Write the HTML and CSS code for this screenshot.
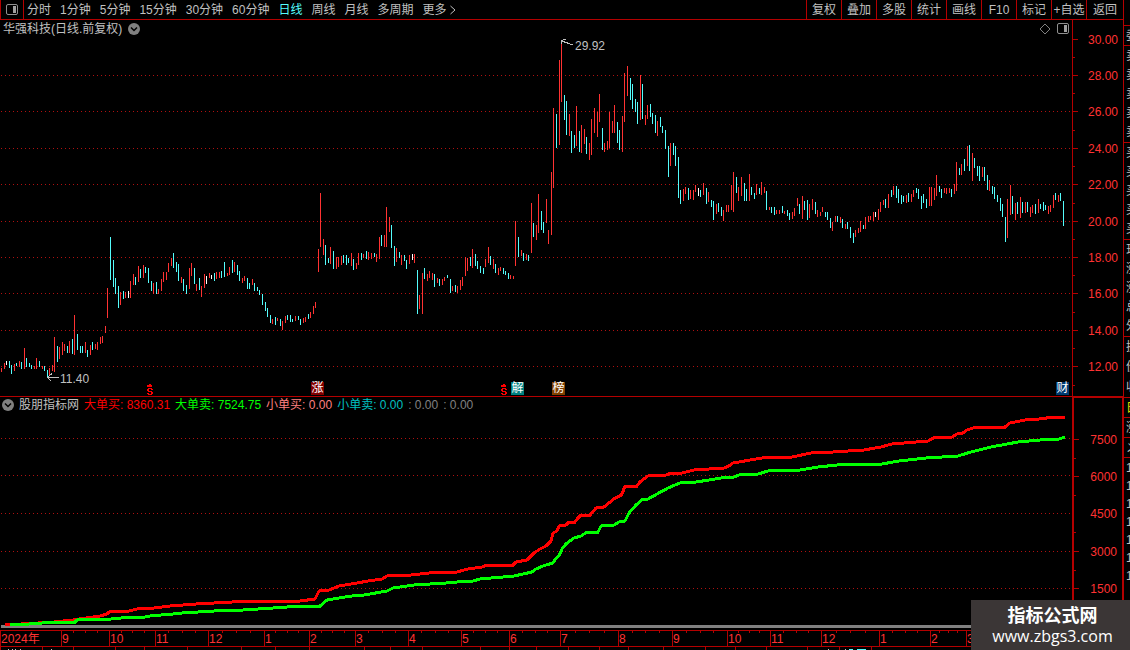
FILE: index.html
```html
<!DOCTYPE html>
<html lang="zh-CN">
<head>
    <meta charset="UTF-8">
    <meta name="viewport" content="width=device-width, initial-scale=1.0">
    <title>华强科技 日线</title>
    <link rel="stylesheet" href="styles.css">
</head>
<body>
    <div class="terminal">
        <main class="main">
            <header class="toolbar">
                <button class="layout-btn" aria-label="布局">
                    <svg width="12" height="12" viewBox="0 0 12 12"><rect x="0.5" y="0.5" width="11" height="10" rx="1.5" fill="none" stroke="#909090"/><rect x="7" y="2" width="3" height="7" fill="#a0a0a0"/></svg>
                </button>
                <nav class="periods">
                    <button>分时</button>
                    <button>1分钟</button>
                    <button>5分钟</button>
                    <button>15分钟</button>
                    <button>30分钟</button>
                    <button>60分钟</button>
                    <button class="active">日线</button>
                    <button>周线</button>
                    <button>月线</button>
                    <button>多周期</button>
                    <button class="more">更多<svg width="6" height="10" viewBox="0 0 6 10"><path d="M0.5 1L5 5L0.5 9" fill="none" stroke="#c0c0c0"/></svg></button>
                </nav>
                <div class="tools">
                    <button>复权</button>
                    <button>叠加</button>
                    <button>多股</button>
                    <button>统计</button>
                    <button>画线</button>
                    <button>F10</button>
                    <button>标记</button>
                    <button>+自选</button>
                    <button>返回</button>
                </div>
            </header>

            <section class="panel price">
                <div class="plot" id="pricePlot">
                    <svg class="canvas" id="priceChart" viewBox="0 20 1072 376" preserveAspectRatio="none"></svg>
                    <div class="panel-head">
                        <span>华强科技(日线.前复权)</span>
                        <svg width="12" height="12" viewBox="0 0 12 12"><circle cx="6" cy="6" r="6" fill="#808080"/><path d="M3 4.5L6 7.5L9 4.5" fill="none" stroke="#000" stroke-width="1.5"/></svg>
                        <svg class="head-right" width="12" height="12" viewBox="0 0 12 12"><path d="M6 1L11 6L6 11L1 6Z" fill="none" stroke="#808080"/></svg>
                        <svg width="12" height="12" viewBox="0 0 12 12"><rect x="0.5" y="0.5" width="11" height="10" rx="1.5" fill="none" stroke="#909090"/><rect x="7" y="2" width="3" height="7" fill="#a0a0a0"/></svg>
                    </div>
                </div>
                <div class="axis" id="priceAxis">
                    <svg class="canvas" viewBox="0 20 50 376" preserveAspectRatio="none"></svg>
                </div>
            </section>

            <section class="panel indicator">
                <div class="plot">
                    <svg class="canvas" id="flowChart" viewBox="0 397 1072 233" preserveAspectRatio="none"></svg>
                    <div class="panel-head legend">
                        <svg width="12" height="12" viewBox="0 0 12 12"><circle cx="6" cy="6" r="6" fill="#808080"/><path d="M3 4.5L6 7.5L9 4.5" fill="none" stroke="#000" stroke-width="1.5"/></svg>
                        <span>股朋指标网</span>
                        <span class="big-buy">大单买: 8360.31</span>
                        <span class="big-sell">大单卖: 7524.75</span>
                        <span class="small-buy">小单买: 0.00</span>
                        <span class="small-sell">小单卖: 0.00</span>
                        <span class="none">: 0.00</span>
                        <span class="none">: 0.00</span>
                    </div>
                </div>
                <div class="axis" id="flowAxis">
                    <svg class="canvas" viewBox="0 397 50 233" preserveAspectRatio="none"></svg>
                </div>
            </section>

            <footer class="dates" id="dates">
                <svg class="canvas" viewBox="0 630 1123 20" preserveAspectRatio="none"></svg>
            </footer>
        </main>

        <aside class="quotes">
            <div class="group blank"></div>
            <div class="group one"><span>委</span></div>
            <div class="group five"><span>卖</span><span>卖</span><span>卖</span><span>卖</span><span>卖</span></div>
            <div class="group five"><span>买</span><span>买</span><span>买</span><span>买</span><span>买</span></div>
            <div class="group five"><span>现</span><span>涨</span><span>涨</span><span>总</span><span>外</span></div>
            <div class="group three"><span>换</span><span>份</span><span>收</span></div>
            <div class="group one yellow"><span>日</span></div>
            <div class="group one"><span>涨</span></div>
            <div class="group one"><span>ㄨ</span></div>
            <div class="ticks"><span>14</span><span>14</span><span>14</span><span>14</span><span>14</span><span>14</span><span>14</span></div>
        </aside>
    </div>

    <div class="watermark">
        <strong>指标公式网</strong>
        <span>www.zbgs3.com</span>
    </div>

    <script src="script.js"></script>
</body>
</html>
```

FILE: styles.css
```css
* {
    box-sizing: border-box;
}
body {
    margin: 0;
    background: #000;
    color: #c0c0c0;
    font-family: "Liberation Sans", "Noto Sans CJK SC", sans-serif;
    font-size: 12px;
    line-height: 18px;
    overflow: hidden;
}
button {
    padding: 0;
    border: 0;
    background: none;
    color: inherit;
    font: inherit;
    white-space: nowrap;
    cursor: pointer;
}
.terminal {
    display: grid;
    grid-template-columns: minmax(0, 1fr) 7px;
    height: 100vh;
}
.main {
    display: flex;
    flex-direction: column;
    min-width: 0;
}

/* toolbar */
.toolbar {
    display: flex;
    flex: none;
    height: 20px;
    border-bottom: 1px solid #b40000;
}
.layout-btn {
    display: flex;
    align-items: center;
    justify-content: center;
    width: 24px;
    border-left: 1px solid #b40000;
    border-right: 1px solid #b40000;
}
.periods {
    display: flex;
    gap: 9px;
    padding-left: 3px;
}
.periods .active {
    color: #54fcfc;
}
.more {
    display: flex;
    align-items: center;
    gap: 3px;
}
.tools {
    display: flex;
    margin-left: auto;
}
.tools button {
    width: 35px;
    border-left: 1px solid #b40000;
}
.tools button:last-child {
    width: 37px;
}

/* chart panels */
.panel {
    display: grid;
    grid-template-columns: minmax(0, 1fr) 51px;
    min-height: 0;
}
.price {
    flex: 376;
    border-bottom: 1px solid #b40000;
}
.indicator {
    flex: 233;
}
.plot,
.axis {
    position: relative;
    min-height: 0;
}
.canvas {
    position: absolute;
    top: 0;
    left: 0;
    width: 100%;
    height: 100%;
    shape-rendering: crispEdges;
}
.axis {
    border-left: 1px solid #b40000;
    color: #ff3232;
}
.indicator .axis {
    border: 1px solid #b40000;
    border-left-width: 2px;
    border-bottom: 0;
}
.axis span {
    position: absolute;
    right: 5px;
    transform: translateY(-50%);
}
.panel-head {
    position: relative;
    display: flex;
    align-items: center;
    gap: 6px;
    padding: 0 3px;
}
.head-right {
    margin-left: auto;
}
.legend {
    gap: 5px;
    padding: 0 2px;
    line-height: 16px;
    white-space: nowrap;
}
.big-buy {
    color: #ff0000;
}
.big-sell {
    color: #00ff00;
}
.small-buy {
    color: #ff8080;
}
.small-sell {
    color: #00c0c0;
}
.none {
    color: #808080;
}

/* marks on the price chart */
.mark,
.tag {
    position: absolute;
}
.mark {
    transform: translateY(-50%);
}
.tag {
    width: 13px;
    height: 13px;
    color: #fff;
    line-height: 13px;
    text-align: center;
}
.tag.rise {
    background: #800000;
}
.tag.unlock {
    background: #008080;
}
.tag.rank {
    background: #804000;
}
.tag.report {
    background: #003a70;
}

/* date axis */
.dates {
    position: relative;
    flex: none;
    height: 20px;
    color: #ff3232;
}
.dates span {
    position: absolute;
    top: 0;
}

/* quote list cut by the window edge */
.quotes {
    border-left: 1px solid #b40000;
    overflow: hidden;
}
.group {
    display: flex;
    flex-direction: column;
    justify-content: space-around;
    border-bottom: 1px solid #b40000;
    padding-left: 2px;
}
.blank {
    height: 26px;
}
.one {
    height: 20px;
}
.five {
    height: 97px;
}
.three {
    height: 61px;
}
.yellow {
    color: #e0e000;
}
.ticks {
    display: flex;
    flex-direction: column;
    padding: 1px 0 0 2px;
}

.watermark {
    position: fixed;
    right: 0;
    bottom: 0;
    display: flex;
    flex-direction: column;
    align-items: center;
    width: 159px;
    height: 50px;
    padding: 2px 0 0 4px;
    background: #3b3636;
    color: #fff;
    font-family: "Open Sans", "Noto Sans CJK SC", sans-serif;
    font-size: 16px;
    line-height: 20px;
}
.watermark strong {
    font-family: "Noto Sans CJK SC", sans-serif;
    font-size: 18px;
    line-height: 24px;
}
```

FILE: script.js
```js
const RED = "#ff3232", CYAN = "#54fcfc", WHITE = "#ffffff", LINE = "#b40000";

// colour x top bottom
const bars = `
R 1 368 372,R 4 363 369,W 6 361 365,C 9 361 368,C 11 365 374,R 14 364 371,C 16 363 366,R 19 361 367,C 21 362 369,R 24 348 369,
C 26 358 367,C 29 363 367,C 31 365 369,R 34 366 369,R 36 358 369,C 39 361 367,R 42 366 369,C 44 366 371,C 47 370 378,R 49 368 376,
R 52 365 371,R 54 337 372,C 57 346 362,R 59 347 359,R 62 342 355,R 64 344 351,C 67 346 353,R 69 341 353,C 72 339 354,R 74 315 355,
C 77 334 350,C 80 346 353,C 82 346 353,R 85 342 353,C 87 350 357,R 90 345 355,C 92 342 350,R 95 344 349,R 97 342 350,R 100 337 344,
R 102 336 343,R 105 326 333,R 107 288 318,C 110 237 280,C 113 260 287,C 115 278 294,C 118 286 308,R 120 292 305,C 123 291 299,R 125 292 298,
W 128 291 298,R 130 281 298,R 133 274 285,C 135 277 285,R 138 266 282,C 140 269 278,R 143 265 278,C 145 267 273,C 148 268 283,C 151 281 291,
R 153 283 294,C 156 282 294,R 158 289 294,R 161 279 291,R 163 272 282,R 166 272 280,R 168 263 272,R 171 258 266,C 173 253 268,C 176 262 272,
C 178 264 281,R 181 277 283,C 183 279 291,C 186 285 294,R 189 268 289,R 191 263 276,C 194 268 284,R 196 284 291,C 199 278 290,R 201 286 297,
R 204 274 288,W 206 276 284,R 209 273 278,W 211 275 279,C 214 273 281,R 216 272 279,R 219 272 278,C 221 271 278,C 224 262 277,R 227 273 276,
R 229 267 275,C 232 260 273,R 234 262 272,C 237 265 275,C 239 271 281,R 242 278 283,R 244 276 281,C 247 278 289,C 249 283 289,R 252 279 285,
C 254 283 291,C 257 287 291,C 259 290 295,C 262 294 305,C 265 302 311,C 267 308 317,C 270 315 323,R 272 319 324,C 275 317 325,R 277 318 321,
C 280 319 326,R 282 321 330,R 285 316 323,C 287 315 320,C 290 315 322,C 292 319 322,R 295 316 321,C 298 316 320,C 300 319 325,R 303 318 323,
R 305 317 322,C 308 314 319,R 310 312 318,R 313 306 314,R 315 302 308,R 318 249 272,R 320 193 247,R 323 239 255,C 325 245 265,C 328 258 263,
R 330 247 264,C 333 251 269,R 336 257 269,R 338 257 267,R 341 256 265,C 343 255 263,C 346 255 265,C 348 258 263,R 351 253 266,C 353 259 270,
R 356 263 269,R 358 253 265,C 361 253 260,R 363 254 258,C 366 251 259,R 368 252 260,R 371 253 259,C 374 253 257,R 376 254 262,R 379 237 259,
C 381 235 246,R 384 235 247,R 386 207 247,R 389 217 232,C 391 225 248,C 394 246 266,R 396 248 262,C 399 252 258,R 401 255 265,C 404 255 261,
C 406 260 269,R 409 255 264,W 412 254 260,R 414 254 263,C 417 270 314,R 419 295 309,R 422 273 314,C 424 268 279,R 427 274 281,R 429 271 278,
R 432 273 280,C 434 274 287,R 437 278 283,C 439 279 286,R 442 279 285,R 444 277 281,C 447 275 278,C 450 279 293,R 452 286 291,C 455 285 292,
R 457 286 293,R 460 280 290,R 462 277 286,R 465 257 276,R 467 258 271,C 470 257 266,R 472 249 268,C 475 254 266,C 477 261 269,C 480 266 273,
C 483 268 274,R 485 259 267,R 488 247 263,C 490 256 265,R 493 259 269,C 495 264 273,R 498 268 275,R 500 267 271,C 503 268 274,C 505 271 275,
C 508 273 279,R 510 275 279,R 513 276 279,R 515 221 266,C 518 237 257,R 521 250 256,C 523 253 261,R 526 254 260,C 528 255 261,R 531 203 253,
C 533 223 237,R 536 225 240,R 538 194 233,C 541 211 230,C 543 222 233,R 546 199 223,R 548 230 244,R 551 172 235,R 553 108 188,C 556 114 148,
R 559 60 145,R 561 43 102,C 564 95 120,C 566 101 135,R 569 114 136,C 571 131 153,C 574 135 148,R 576 106 146,C 579 131 152,R 581 125 153,
R 584 129 144,C 586 137 154,R 589 143 160,R 591 119 155,R 594 108 133,R 597 112 137,R 599 94 122,C 602 128 150,R 604 143 152,R 607 141 150,
R 609 112 148,R 612 121 133,R 614 105 133,C 617 122 143,C 619 130 150,R 622 116 152,R 624 73 122,R 627 66 96,C 630 78 100,C 632 84 109,
C 635 99 112,C 637 102 124,R 640 75 120,C 642 84 119,R 645 115 125,R 647 105 119,C 650 104 117,C 652 113 124,C 655 115 133,R 657 121 136,
C 660 117 127,C 662 126 133,C 665 130 149,C 668 146 177,R 670 143 166,C 673 143 155,C 675 146 166,C 678 157 198,C 680 190 204,R 683 189 201,
R 685 187 194,C 688 188 200,R 690 190 199,R 693 190 200,R 695 185 192,W 698 188 196,C 700 190 197,R 703 183 195,C 706 188 204,R 708 192 202,
C 711 200 207,C 713 201 220,R 716 204 214,C 718 203 212,C 721 207 216,R 723 210 221,R 726 205 212,R 728 205 212,R 731 185 210,R 733 172 212,
C 736 177 193,R 738 187 201,R 741 177 196,C 744 183 201,C 746 189 201,R 749 174 201,C 751 187 195,C 754 193 199,R 756 184 195,C 759 188 194,
R 761 182 195,R 764 187 193,C 766 191 210,R 769 207 210,C 771 207 213,C 774 207 215,R 776 210 214,R 779 210 214,C 782 206 213,R 784 211 214,
C 787 210 216,C 789 213 220,R 792 212 219,R 794 208 216,R 797 198 206,C 799 204 214,R 802 196 219,C 804 201 210,C 807 200 220,R 809 204 218,
R 812 199 210,C 815 202 214,R 817 210 217,R 820 212 216,R 822 207 212,C 825 212 217,C 827 212 220,C 830 218 228,R 832 222 231,R 835 216 222,
C 837 216 222,R 840 217 223,C 842 219 228,R 845 224 229,C 847 222 229,C 850 227 238,C 853 233 243,R 855 230 237,R 858 228 233,R 860 221 232,
C 863 225 229,R 865 217 229,R 868 216 222,R 870 216 220,R 873 212 221,W 875 212 217,R 878 209 220,R 880 202 212,R 883 200 205,C 885 199 208,
R 888 194 208,C 891 190 197,R 893 186 195,C 896 186 198,C 898 189 203,C 901 195 204,C 903 196 202,R 906 195 203,C 908 193 202,R 911 194 202,
R 913 190 197,C 916 188 193,C 918 189 199,C 921 196 209,C 923 194 203,C 926 199 208,R 929 187 206,R 931 187 206,R 934 188 200,R 936 175 196,
C 939 186 192,C 941 189 198,R 944 188 193,R 946 188 194,R 949 188 193,C 951 189 197,R 954 184 194,R 956 162 191,C 959 168 175,R 961 164 175,
C 964 159 171,R 967 146 166,C 969 145 171,R 972 153 181,C 974 158 168,C 977 166 176,C 979 166 181,R 982 167 177,C 984 167 181,C 987 175 190,
R 989 180 191,C 992 186 194,C 994 187 199,C 997 195 202,C 1000 198 211,C 1002 204 217,C 1005 217 242,R 1007 199 238,R 1010 185 215,C 1012 196 214,
R 1015 203 220,C 1017 202 214,R 1020 197 218,C 1022 202 213,R 1025 202 213,C 1027 202 212,R 1030 207 217,R 1032 205 213,C 1035 204 214,R 1038 199 213,
C 1040 204 209,C 1043 202 211,C 1045 205 210,R 1048 206 214,R 1050 205 212,R 1053 195 208,C 1055 193 200,R 1058 195 202,C 1060 193 201,C 1063 201 226`;

const buyLine = "5,625 54,622 73,620 86,618 100,616 107,614 109,612 129,611 137,609 154,608 170,606 196,604 214,603 250,601 300,601 315,599 319,591 329,590 339,586 357,583 368,581 382,579 387,576 411,575 429,573 457,572 468,569 482,567 487,565 513,565 516,562 527,560 534,553 540,549 546,546 551,541 553,533 557,531 559,526 566,525 569,522 575,522 578,518 581,515 590,515 596,508 604,507 615,498 620,496 622,494 625,486 637,486 640,482 648,476 666,475 671,473 682,473 694,470 724,468 729,466 733,463 762,458 792,457 811,453 833,452 864,450 881,447 892,444 928,441 935,437 952,437 957,434 963,433 967,430 973,428 982,427 1005,427 1010,423 1025,420 1039,419 1054,417 1065,417";
const sellLine = "10,625 29,624 55,622 75,622 77,620 111,619 121,618 145,617 150,616 173,614 182,613 214,611 243,610 273,608 302,606 320,606 327,600 345,597 352,596 364,595 387,591 393,588 414,585 446,583 457,582 473,581 480,579 514,576 532,572 536,569 543,566 553,563 556,558 559,556 562,549 566,544 574,538 581,536 587,532 598,532 601,526 614,525 619,522 625,521 629,513 636,505 643,499 648,499 657,494 668,488 680,483 696,482 709,480 721,478 734,477 739,475 758,474 768,471 800,470 818,467 837,465 852,464 882,464 899,461 926,458 958,456 971,452 991,447 1018,442 1040,440 1059,439 1065,437";

const priceTicks = [["30.00", 39], ["28.00", 75], ["26.00", 111], ["24.00", 148], ["22.00", 184], ["20.00", 221], ["18.00", 257], ["16.00", 293], ["14.00", 330], ["12.00", 366]];
const flowTicks = [["7500", 438], ["6000", 475], ["4500", 513], ["3000", 551], ["1500", 588]];
const months = [["2024年", 0], ["9", 61], ["10", 109], ["11", 155], ["12", 208], ["1", 264], ["2", 309], ["3", 355], ["4", 408], ["5", 461], ["6", 509], ["7", 560], ["8", 618], ["9", 672], ["10", 727], ["11", 770], ["12", 821], ["1", 879], ["2", 930], ["3", 966]];

function draw(svg, name, attrs) {
    const el = document.createElementNS("http://www.w3.org/2000/svg", name);
    for (const key in attrs) {
        el.setAttribute(key, attrs[key]);
    }
    svg.appendChild(el);
}

function rect(svg, x, y, width, height, fill) {
    draw(svg, "rect", { x, y, width, height, fill });
}

function addLabel(parent, text, className, left, top) {
    const span = document.createElement("span");
    span.textContent = text;
    span.className = className;
    if (left !== null) span.style.left = left + "%";
    if (top !== null) span.style.top = top + "%";
    parent.appendChild(span);
}

function drawGrid(svg, ticks) {
    ticks.forEach(([, y]) => {
        draw(svg, "path", { d: `M1 ${y + 0.5}H1072`, stroke: "#b01010", "stroke-dasharray": "1 3" });
    });
}

function drawAxis(id, ticks, start, height) {
    const axis = document.getElementById(id);
    const svg = axis.querySelector("svg");
    ticks.forEach(([text, y], i) => {
        rect(svg, 0, y, 5, 1, LINE);
        const next = ticks[i + 1] ? ticks[i + 1][1] : y + 37;
        if (id === "priceAxis" || ticks[i + 1]) {
            rect(svg, 0, Math.round((y + next) / 2), 2, 1, LINE);
        }
        addLabel(axis, text, "", null, (y + 1 - start) / height * 100);
    });
}

// price chart
const priceChart = document.getElementById("priceChart");
const pricePlot = document.getElementById("pricePlot");
drawGrid(priceChart, priceTicks.slice(1));
bars.trim().split(",").forEach(item => {
    const [c, x, top, bottom] = item.trim().split(" ");
    rect(priceChart, x, top, 1, bottom - top, { R: RED, C: CYAN, W: WHITE }[c]);
});
draw(priceChart, "path", { d: "M47 377.5H59M52 373.5L47.5 377.5L51 381M561.5 44V40.5L566 39M561.5 41L566 42.5L573 45", fill: "none", stroke: "#c0c0c0" });

// dividend marks: arrow head over an S
[147, 501].forEach(x => {
    [[2, 384, 2, 1], [0, 385, 5, 2], [1, 388, 4, 1], [0, 389, 2, 2], [4, 389, 2, 1], [1, 391, 4, 1], [4, 392, 2, 2], [0, 393, 2, 1], [1, 394, 4, 1]].forEach(([dx, y, w, h]) => {
        rect(priceChart, x + dx, y, w, h, "#ff0000");
    });
});
const px = x => x / 1072 * 100;
const py = y => (y - 20) / 376 * 100;
addLabel(pricePlot, "11.40", "mark", px(60), py(379));
addLabel(pricePlot, "29.92", "mark", px(575), py(46));
addLabel(pricePlot, "涨", "tag rise", px(311), py(382));
addLabel(pricePlot, "解", "tag unlock", px(511), py(382));
addLabel(pricePlot, "榜", "tag rank", px(552), py(382));
addLabel(pricePlot, "财", "tag report", px(1056), py(382));
drawAxis("priceAxis", priceTicks, 20, 376);

// order flow chart
const flowChart = document.getElementById("flowChart");
drawGrid(flowChart, flowTicks);
rect(flowChart, 1, 625, 1071, 3, "#808080");
draw(flowChart, "polyline", { points: buyLine, fill: "none", stroke: "#ff0000", "stroke-width": 3 });
draw(flowChart, "polyline", { points: sellLine, fill: "none", stroke: "#00ff00", "stroke-width": 3 });
drawAxis("flowAxis", flowTicks, 397, 233);

// dates
const dates = document.getElementById("dates");
const dateSvg = dates.querySelector("svg");
rect(dateSvg, 0, 630, 1123, 1, LINE);
rect(dateSvg, 0, 646, 1123, 1, LINE);
months.forEach(([text, x], i) => {
    rect(dateSvg, x, 630, 1, 16, LINE);
    if (i > 0 && months[i + 1]) {
        const step = (months[i + 1][1] - x) / 4;
        for (let n = 1; n < 4; n++) {
            rect(dateSvg, Math.round(x + step * n), 631, 1, 2, LINE);
        }
    }
    addLabel(dates, text, "", (x + 1) / 1123 * 100, null);
});
[0, 42, 73, 115, 144, 187, 241, 275, 309, 364, 390, 422, 480, 509, 536, 568, 599, 628, 663, 705, 735, 766, 807, 839, 871].forEach(x => {
    rect(dateSvg, x, 647, 1, 3, LINE);
});
[8, 12, 15, 20, 51, 828, 845].forEach(x => rect(dateSvg, x, 649, 1, 1, "#c0c0c0"));
rect(dateSvg, 849, 649, 4, 1, CYAN);
rect(dateSvg, 857, 649, 9, 1, CYAN);
```
